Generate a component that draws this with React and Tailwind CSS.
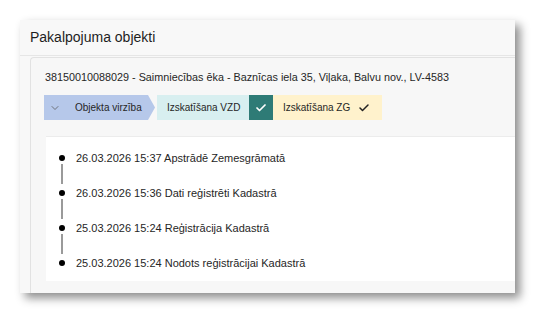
import { Check, ChevronDown } from 'lucide-react';

const events = [
	'26.03.2026 15:37 Apstrādē Zemesgrāmatā',
	'26.03.2026 15:36 Dati reģistrēti Kadastrā',
	'25.03.2026 15:24 Reģistrācija Kadastrā',
	'25.03.2026 15:24 Nodots reģistrācijai Kadastrā',
];

export default function App() {
	return (
		<div
			className="w-[534px] h-[313px] bg-white pt-5 pl-5 text-[#262626]"
			style={{ fontFamily: '"Liberation Sans", Arial, sans-serif' }}
		>
			<div className="w-[495px] h-[273px] bg-[#f8f8f8] overflow-hidden shadow-[5px_5px_9px_rgba(0,0,0,0.45)] flex flex-col">
				{/* header */}
				<div className="h-9 shrink-0 flex items-center px-[10px] border-b border-[#e6e6e6]">
					<h2 className="text-[14px] text-[#1e1e1e]">Pakalpojuma objekti</h2>
				</div>

				<div className="flex-1 pl-[10px] pt-px">
					<div className="h-full w-[520px] rounded-tl-[4px] border-l border-t border-[#e2e2e2] bg-[#f7f7f7] flex flex-col">
						<div className="pl-[14px] pt-[10px] text-[10.8px] h-[27px] leading-[14px] flex items-center">
							38150010088029 - Saimniecības ēka - Baznīcas iela 35, Viļaka, Balvu nov., LV-4583
						</div>

						{/* steps */}
						<div className="flex items-center pl-[13px] mt-[10px] h-[25px] text-[10px]">
							<div
								className="h-full w-[111px] bg-[#b6c8ea] flex items-center pl-[5px] gap-[14px]"
								style={{ clipPath: 'polygon(0 0, 104px 0, 111px 50%, 104px 100%, 0 100%)' }}
							>
								<ChevronDown size={12} strokeWidth={1.5} className="text-[#555]" />
								<span>Objekta virzība</span>
							</div>
							<div className="ml-[2px] h-full w-[92px] bg-[#d8eff0] flex items-center pl-[10px]">
								Izskatīšana VZD
							</div>
							<div className="h-full w-[24px] bg-[#2e7b76] flex items-center justify-center">
								<Check size={12} strokeWidth={3.5} className="text-white" />
							</div>
							<div className="h-full w-[109px] bg-[#fff2cc] flex items-center pl-[10px] pr-[12px] justify-between">
								<span>Izskatīšana ZG</span>
								<Check size={12} strokeWidth={3} className="text-[#222]" />
							</div>
						</div>

						{/* timeline */}
						<div className="mt-4 ml-[15px] h-[145px] bg-white border-t border-[#ececec] pl-[13px] pt-[12px]">
							{events.map((ev, i) => (
								<div key={i} className="flex h-[35px]">
									<div className="w-[6px] flex flex-col items-center">
										<div className="mt-[6px] w-[6px] h-[6px] rounded-full bg-black shrink-0" />
										{i < events.length - 1 && (
											<div className="mt-[3px] w-[2px] h-[22px] bg-[#9a9a9a]" />
										)}
									</div>
									<div className="pl-[11px] text-[11px] leading-[18px]">{ev}</div>
								</div>
							))}
						</div>
					</div>
				</div>
			</div>
		</div>
	);
}
